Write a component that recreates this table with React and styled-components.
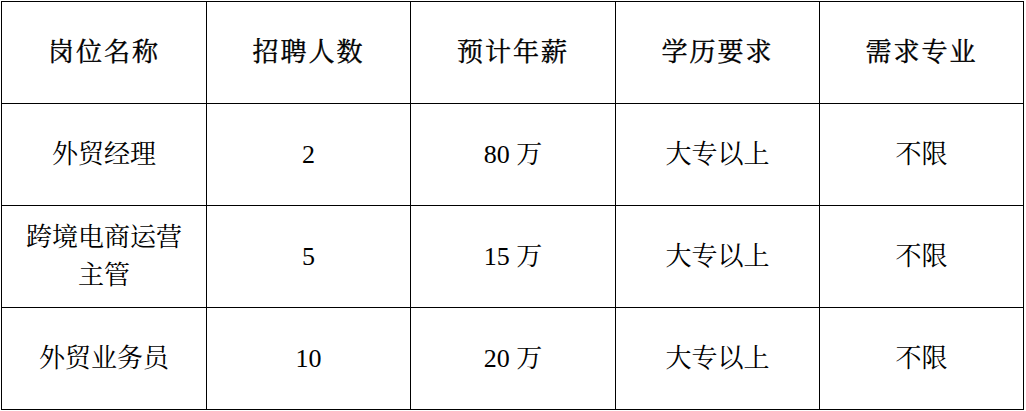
import React from "react";
import styled, { createGlobalStyle } from "styled-components";

const Global = createGlobalStyle`
  html, body { margin: 0; padding: 0; background: #ffffff; }
  body { font-family: "Liberation Serif", "Noto Serif CJK SC", "Noto Sans CJK SC", serif; color: #000; }
`;

const Page = styled.div`
  padding: 1px 0 0 1px;
`;

const Table = styled.div`
  display: grid;
  grid-template-columns: 205px 204px 205px 204px 204px;
  grid-auto-rows: 102px;
  width: max-content;
  border-top: 1px solid #000;
  border-left: 1px solid #000;
`;

const Cell = styled.div`
  box-sizing: content-box;
  display: flex;
  align-items: center;
  justify-content: center;
  text-align: center;
  padding: 0 14px;
  border-right: 1px solid #000;
  border-bottom: 1px solid #000;
  font-size: 26px;
  line-height: 38px;
  letter-spacing: ${(p) => (p.$head ? "2px" : "0")};
  font-weight: 400;
  -webkit-text-stroke: ${(p) => (p.$head ? "0.4px #000" : "0")};
  color: #000;
  overflow: hidden;
  min-width: 0;
`;

const CellText = styled.span`
  display: block;
  max-width: 100%;
`;

const headers = ["岗位名称", "招聘人数", "预计年薪", "学历要求", "需求专业"];
const rows = [
  ["外贸经理", "2", "80 万", "大专以上", "不限"],
  ["跨境电商运营主管", "5", "15 万", "大专以上", "不限"],
  ["外贸业务员", "10", "20 万", "大专以上", "不限"],
];

export default function App() {
  return (
    <Page>
      <Global />
      <Table>
        {headers.map((h) => (
          <Cell key={h} $head>
            <CellText>{h}</CellText>
          </Cell>
        ))}
        {rows.map((r, i) =>
          r.map((c, j) => (
            <Cell key={i + "-" + j}>
              <CellText>{c}</CellText>
            </Cell>
          ))
        )}
      </Table>
    </Page>
  );
}
